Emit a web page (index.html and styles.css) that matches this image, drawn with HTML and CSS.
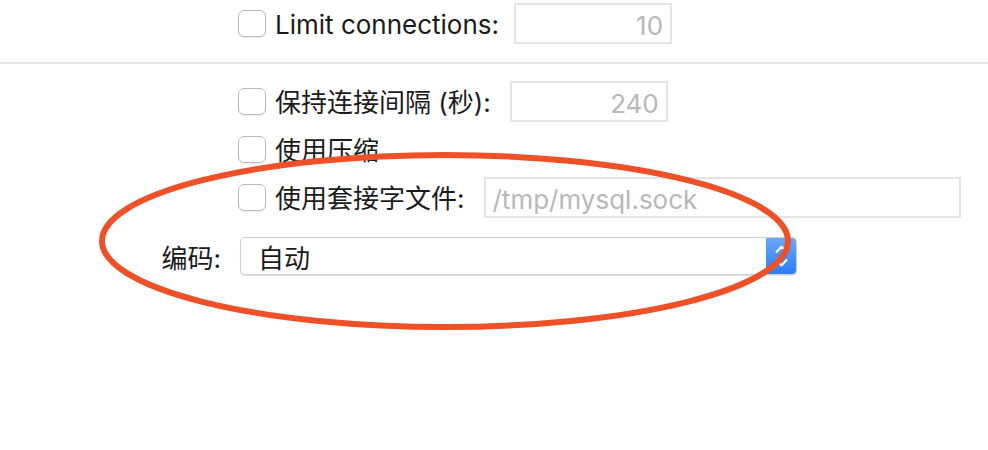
FILE: index.html
```html
<!DOCTYPE html>
<html lang="zh">
<head>
<meta charset="utf-8">
<link rel="stylesheet" href="styles.css">
</head>
<body>
<div class="page">
  <div class="row">
    <span class="cb"></span>
    <span class="label">Limit connections:</span>
    <span class="field num first">10</span>
  </div>
  <div class="sep"></div>
  <div class="group">
    <div class="row">
      <span class="cb"></span>
      <span class="label">保持连接间隔 (秒):</span>
      <span class="field num">240</span>
    </div>
    <div class="row">
      <span class="cb"></span>
      <span class="label">使用压缩</span>
    </div>
    <div class="row">
      <span class="cb"></span>
      <span class="label">使用套接字文件:</span>
      <span class="field path">/tmp/mysql.sock</span>
    </div>
  </div>
  <div class="enc-row">
    <span class="enc-label">编码:</span>
    <div class="select">
      <span class="select-value">自动</span>
      <span class="stepper">
        <svg width="31" height="38" viewBox="0 0 31 38">
          <path d="M10.5 15 L15.5 9.5 L20.5 15" fill="none" stroke="#fff" stroke-width="2" stroke-linecap="round" stroke-linejoin="round"/>
          <path d="M10.5 23 L15.5 28.5 L20.5 23" fill="none" stroke="#fff" stroke-width="2" stroke-linecap="round" stroke-linejoin="round"/>
        </svg>
      </span>
    </div>
  </div>
</div>
<svg class="mark" width="988" height="450" viewBox="0 0 988 450">
  <ellipse cx="445" cy="241" rx="343" ry="86" fill="none" stroke="#ee5127" stroke-width="6"/>
</svg>
</body>
</html>
```
FILE: styles.css
```css
html, body {
  margin: 0;
  padding: 0;
  background: #fff;
}
body {
  width: 988px;
  height: 450px;
  position: relative;
  overflow: hidden;
  font-family: "Inter", "Noto Sans CJK SC", sans-serif;
  font-size: 26px;
  color: #1b1b1b;
}
.page {
  padding-top: 3px;
}
.row {
  display: flex;
  align-items: center;
  height: 41px;
  padding-left: 238px;
}
.cb {
  width: 28px;
  height: 27px;
  box-sizing: border-box;
  border: 1px solid #b9b9b9;
  border-radius: 6px;
  background: #fff;
  box-shadow: 0 1px 1px rgba(0,0,0,0.06);
  margin-right: 9px;
  flex: none;
}
.label {
  line-height: 41px;
  padding-top: 2px;
  white-space: nowrap;
}
.field {
  height: 41px;
  box-sizing: border-box;
  border: 2px solid #e4e4e4;
  color: #b8b8b8;
  display: flex;
  align-items: center;
  padding: 3px 7px 0;
  margin-left: 19px;
  flex: none;
}
.field.first {
  margin-left: 15px;
}
.field.num {
  width: 158px;
  justify-content: flex-end;
}
.field.path {
  width: 477px;
}
.sep {
  height: 2px;
  background: #e6e6e6;
  margin-top: 18px;
}
.group {
  padding-top: 17px;
  display: flex;
  flex-direction: column;
  gap: 7px;
}
.enc-row {
  margin-top: 19px;
  display: flex;
  align-items: center;
  height: 38px;
}
.enc-label {
  width: 221px;
  text-align: right;
  margin-right: 19px;
}
.select {
  width: 557px;
  height: 38px;
  box-sizing: border-box;
  border: 1px solid #cfcfcf;
  border-radius: 5px;
  box-shadow: 0 1px 1px rgba(0,0,0,0.12);
  display: flex;
  align-items: center;
  overflow: hidden;
  background: #fff;
}
.select-value {
  flex: 1;
  padding-left: 17px;
}
.stepper {
  width: 31px;
  height: 38px;
  background: linear-gradient(#6aa8fa, #2a7cf6);
  border-radius: 0 5px 5px 0;
  display: flex;
  margin-right: -1px;
}
.mark {
  position: absolute;
  left: 0;
  top: 0;
  pointer-events: none;
}
```
